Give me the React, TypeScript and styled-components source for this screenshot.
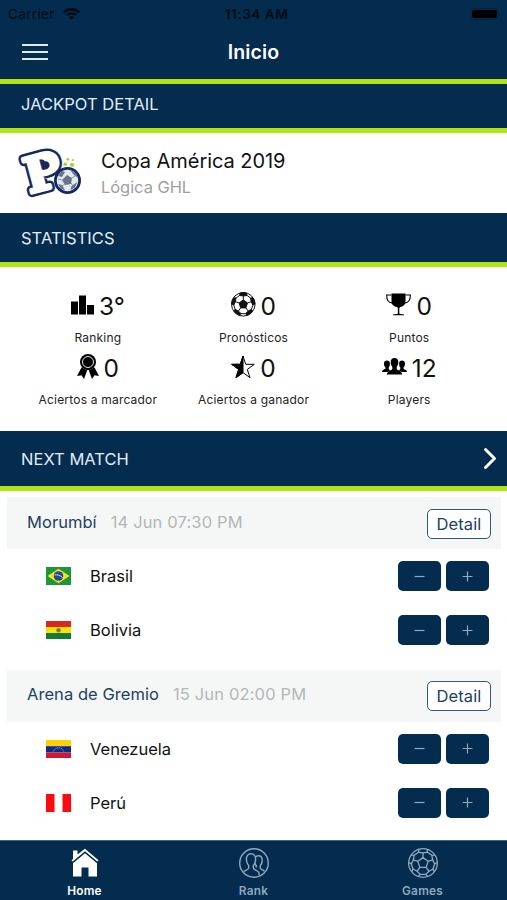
import React from "react";
import styled, { createGlobalStyle } from "styled-components";

const NAVY = "#032c4f";
const LIME = "#b2e313";
const MUTED = "#8fa9bf";

const GlobalStyle = createGlobalStyle`
  * { box-sizing: border-box; }
  body { margin: 0; background: #fff; font-family: Inter, "Liberation Sans", sans-serif; color: #111; }
  svg { display: block; flex: none; overflow: visible; }
`;

const Screen = styled.div`
  width: 507px;
  height: 900px;
  display: flex;
  flex-direction: column;
  background: #fff;
  overflow: hidden;
  white-space: nowrap;
`;

const TopBar = styled.header`
  height: 84px;
  background: ${NAVY};
  border-bottom: 5px solid ${LIME};
`;

const StatusBar = styled.div`
  height: 27px;
  padding: 1px 8px 0;
  display: grid;
  grid-template-columns: 1fr auto 1fr;
  align-items: center;
  font-size: 13.5px;
  letter-spacing: 0.35px;
  color: #020a12;
`;

const Carrier = styled.div`
  display: flex;
  align-items: center;
  gap: 8px;
`;

const Clock = styled.div`
  font-weight: 600;
  font-size: 13.5px;
  letter-spacing: 0.55px;
  padding-left: 6px;
`;

const Battery = styled.div`
  justify-self: end;
  width: 29px;
  height: 12px;
  padding: 1px;
  border: 1px solid #04223d;
  border-radius: 4px;
  &::before {
    content: "";
    display: block;
    height: 8px;
    border-radius: 2px;
    background: #000;
  }
`;

const NavRow = styled.div`
  height: 50px;
  padding: 0 22px;
  display: grid;
  grid-template-columns: 1fr auto 1fr;
  align-items: center;
`;

const Title = styled.h1`
  margin: 0;
  color: #fff;
  font-size: 19.5px;
  font-weight: 600;
  letter-spacing: 0.15px;
`;

const MenuLines = styled.div`
  width: 26px;
  height: 16px;
  display: flex;
  flex-direction: column;
  justify-content: space-between;
  &::before, &::after { content: ""; height: 2px; background: #dfe9f2; }
`;

const MenuLine = styled.div`
  height: 2px;
  background: #dfe9f2;
`;

const SectionBar = styled.div<{ $height: number; $lift?: number }>`
  height: ${(p) => p.$height}px;
  padding: 0 10px ${(p) => p.$lift ?? 0}px 21px;
  display: flex;
  align-items: center;
  justify-content: space-between;
  background: ${NAVY};
  border-bottom: 5px solid ${LIME};
  color: #e3edf6;
  font-size: 16.5px;
  letter-spacing: 0.03px;
`;

const Jackpot = styled.section`
  height: 80px;
  padding-left: 20px;
  display: flex;
  align-items: center;
  gap: 18px;
`;

const JackpotText = styled.div`
  padding-top: 2px;
  display: flex;
  flex-direction: column;
  font-size: 20px;
  line-height: 27px;
  letter-spacing: -0.06px;
`;

const Subtitle = styled.span`
  color: #a0a0a0;
  font-size: 16.5px;
  line-height: 25px;
`;

const Stats = styled.section`
  height: 164px;
  padding: 22px 20px 0;
  display: grid;
  grid-template-columns: repeat(3, 155.7px);
  grid-template-rows: 62px 62px;
`;

const Stat = styled.div`
  display: flex;
  flex-direction: column;
  align-items: center;
`;

const StatTop = styled.div`
  height: 34px;
  display: flex;
  align-items: center;
  gap: 5px;
`;

const IconSlot = styled.span`
  margin-top: -3px;
`;

const StatValue = styled.span`
  font-size: 24.5px;
  line-height: 34px;
`;

const StatLabel = styled.span`
  margin-top: 7px;
  font-size: 12px;
  line-height: 16px;
  letter-spacing: 0.2px;
  color: #222;
`;

const Match = styled.section`
  height: 172.5px;
  padding: 6px 6px 0 7px;
  display: flex;
  flex-direction: column;
`;

const MatchHeader = styled.div`
  height: 52px;
  padding: 0 10px 0 20px;
  display: flex;
  align-items: center;
  background: #f5f6f6;
  color: #1b4163;
  font-size: 16.5px;
  letter-spacing: 0.05px;
`;

const Place = styled.span`
  margin-top: -3px;
`;

const Kickoff = styled.span`
  flex: 1;
  margin: -3px 0 0 14px;
  color: #b5b6b8;
  letter-spacing: 0.15px;
`;

const DetailButton = styled.button`
  width: 64px;
  height: 30px;
  margin-top: 1px;
  padding: 0;
  border: 1.5px solid #33577a;
  border-radius: 5px;
  background: #fff;
  color: #1b4163;
  font: 400 16.5px Inter, sans-serif;
  letter-spacing: 0.1px;
`;

const TeamRow = styled.div`
  height: 54px;
  flex: none;
  padding: 0 12px 0 39px;
  display: flex;
  align-items: center;
`;

const TeamName = styled.span`
  flex: 1;
  margin-left: 19px;
  font-size: 16.5px;
`;

const StepButton = styled.button`
  width: 43px;
  height: 30px;
  margin-left: 5px;
  padding: 0;
  border: 0;
  border-radius: 5px;
  background: ${NAVY};
  display: flex;
  align-items: center;
  justify-content: center;
`;

const TabBar = styled.nav`
  height: 60px;
  margin-top: auto;
  display: grid;
  grid-template-columns: repeat(3, 1fr);
  background: ${NAVY};
  border-top: 1px solid #49657e;
`;

const Tab = styled.div<{ $active?: boolean }>`
  padding-top: 7px;
  display: flex;
  flex-direction: column;
  align-items: center;
  gap: 5px;
  color: ${(p) => (p.$active ? "#fff" : MUTED)};
  font-size: 11.8px;
  font-weight: 600;
  line-height: 16px;
  letter-spacing: 0.25px;
`;

const polar = (r: number, deg: number) => {
  const a = ((deg - 90) * Math.PI) / 180;
  return `${(r * Math.cos(a)).toFixed(2)} ${(r * Math.sin(a)).toFixed(2)}`;
};

const corners = [0, 72, 144, 216, 288];

function Ball({ r, filled, stroke = 1.2, center = 0.36 }: { r: number; filled?: boolean; stroke?: number; center?: number }) {
  const fill = filled ? "currentColor" : "none";
  return (
    <svg width={r * 2} height={r * 2} viewBox={`${-r} ${-r} ${r * 2} ${r * 2}`} fill="none" stroke="currentColor" strokeWidth={stroke} strokeLinejoin="round">
      <circle r={r - stroke / 2} />
      <path fill={fill} d={`M${corners.map((t) => polar(r * center, t)).join("L")}Z`} />
      {corners.map((t) => (
        <React.Fragment key={t}>
          <path d={`M${polar(r * center, t)}L${polar(r * 0.68, t)}M${polar(r * 0.78, t + 23)}L${polar(r * 0.78, t + 49)}`} />
          <path
            fill={fill}
            d={`M${polar(r * 0.95, t - 16)}L${polar(r * 0.78, t - 23)}L${polar(r * 0.68, t)}L${polar(r * 0.78, t + 23)}L${polar(r * 0.95, t + 16)}${filled ? `L${polar(r * 0.95, t)}Z` : ""}`}
          />
        </React.Fragment>
      ))}
    </svg>
  );
}

const Wifi = () => (
  <svg width="17" height="12" viewBox="0 0 17 12" fill="none" stroke="#020a12" strokeWidth="2.3">
    <path d="M1 4.3a10.8 10.8 0 0 1 15 0M3.9 7.2a6.7 6.7 0 0 1 9.2 0" />
    <path d="M8.5 11.8 6 9.3a3.7 3.7 0 0 1 5 0Z" fill="#020a12" stroke="none" />
  </svg>
);

const Logo = () => (
  <svg width="63" height="52" viewBox="0 0 63 52">
    <g transform="translate(1.500 -1.500) rotate(-15 22 26)" fontFamily="DejaVu Serif" fontWeight="700" fontSize="48" strokeLinejoin="round">
      <text x="3" y="43.500" fill="#15295f" stroke="#15295f" strokeWidth="9">P</text>
      <text x="3" y="43.500" fill="#fff" stroke="#fff" strokeWidth="4">P</text>
      <path d="M22 16.500h3.500c5.500 0 5.500 8 0 8H22Z" fill="#15295f" />
    </g>
    <circle cx="47.500" cy="33.500" r="13.500" fill="#15295f" />
    <circle cx="47.500" cy="33.500" r="10.700" fill="#e5e8eb" />
    <path d="m47 28 5 3-1 6-6 1-3-5ZM38 29l4-5 3 1-3 5ZM50 23l6 3 2 5-4-3ZM57.500 35l-3 6-4 2 1-4ZM38 37l4 1 3 5-4-1Z" fill="#66758c" />
    <path d="m52 31 3-2M51 36l2 3M45 37l-3 2M42 33l-4-1" stroke="#8995a7" />
    <path d="m43 18.500 1.300-3.100 3.200.6-1.200 3ZM49.500 19l1.300-3.300 3.700 1-1.200 3.300ZM46 12.500l1.600-2.200 2 2-1.800 1.600ZM51.500 13l1.600-1.500 1 2-1.600.8Z" fill="#acd13b" />
  </svg>
);

const Podium = () => (
  <svg width="23" height="20" viewBox="0 0 23 20" fill="#000">
    <path d="M0 6.500h7v13H0ZM8 .5h7v19H8ZM16 10h7v9.500h-7Z" />
  </svg>
);

const Trophy = () => (
  <svg width="25" height="23" viewBox="0 0 25 23">
    <path d="M5.500.5h14v8c0 3.500-2.800 5-6 6v6.200l4.500.8v.8H7v-.8l4.800-.8v-6.200c-3.500-1-6.300-2.500-6.300-6Z" fill="#000" />
    <path d="M11.200 15h2.800v5.500h-2.800Z" fill="#fff" />
    <path d="M12.600 14v7.500" stroke="#000" strokeWidth="1.400" />
    <path d="M5.500 2H.6c0 5 2 8 6.300 8.300M19.500 2h4.900c0 5-2 8-6.300 8.300" fill="none" stroke="#000" strokeWidth="1.100" />
  </svg>
);

const Ribbon = () => (
  <svg width="22" height="25" viewBox="0 0 22 25">
    <path d="m4.500 13.500 5.800 2.500-3.300 9-2.500-3.700L0 22ZM17.500 13.500l-5.800 2.500 3.300 9 2.500-3.700L22 22Z" fill="#000" />
    <circle cx="11" cy="8" r="8" fill="#000" />
    <circle cx="11" cy="8" r="5.500" fill="none" stroke="#e0e0e0" strokeWidth="1" />
  </svg>
);

const HalfStar = () => (
  <svg width="24" height="24" viewBox="0 0 24 24" stroke="#000" strokeWidth="1">
    <path d="m12 1 2.700 8.300h8.600l-7 5.100 2.700 8.300-7-5.100-7 5.100 2.700-8.300-7-5.100h8.600Z" fill="#fff" />
    <path d="M12 1v16.600l-7 5.100 2.700-8.300-7-5.100h8.600Z" fill="#000" />
  </svg>
);

const People = () => (
  <svg width="25" height="17" viewBox="0 0 25 17" fill="#000">
    <path d="M12.500 0c2.500 0 4 1.700 3.800 4.200-.1 2-.7 3.500-1.600 4.500v2.200c.7 1.600 5 1.300 5.500 5.600H4.800c.5-4.300 4.800-4 5.500-5.600V8.700c-.9-1-1.500-2.500-1.600-4.500C8.500 1.700 10 0 12.500 0Z" />
    <path d="M4.900 2.500c1.900 0 3 1.200 3 3.200 0 2-.7 3.200-1.200 3.900v1.500c.3.600 1.200.9 1.700 1.200-1.200.5-2.200 1-2.800 1.700H0c.3-2.700 2.900-2 3.400-3.200V9.600C2.600 8.600 2 7.300 2 5.700c0-2 1.100-3.200 2.900-3.200Z" />
    <path d="M20.100 2.500c-1.900 0-3 1.200-3 3.200 0 2 .7 3.200 1.200 3.900v1.500c-.3.600-1.200.9-1.700 1.200 1.200.5 2.200 1 2.800 1.700H25c-.3-2.700-2.900-2-3.400-3.200V9.600c.8-1 1.400-2.300 1.400-3.900 0-2-1.100-3.200-2.900-3.200Z" />
  </svg>
);

const Chevron = () => (
  <svg width="13" height="21" viewBox="0 0 13 21" fill="none" stroke="#fff" strokeWidth="3" strokeLinecap="round" strokeLinejoin="round">
    <path d="m1.500 1.500 9 9-9 9" />
  </svg>
);

const House = () => (
  <svg width="28" height="30" viewBox="0 0 28 30">
    <path d="M2 2.500h4.500v4L14 .8l13.500 11.500-1.200 1.300L14 3.300 1.700 13.600.5 12.300 2 11Z" fill="#fff" />
    <path d="M14 5.200 26 15.300v13.200h-8.500v-9h-7v9H2V15.300Z" fill="#fff" />
  </svg>
);

const RankIcon = () => (
  <svg width="30" height="30" viewBox="0 0 30 30" fill="none" stroke={MUTED} strokeWidth="1.400">
    <circle cx="15" cy="15" r="14.300" />
    <path d="M4.500 24.300c1-2.300 4.800-2 5.200-4.300v-2.200C8.200 16 7.600 14 7.400 11.600 7.200 8 9 5.800 12 5.800s4.800 2.200 4.600 5.800c-.2 2.400-.8 4.400-2.300 6.200V20c.5 2.300 4.800 2 5.600 4.800.2.700.3 1.400.3 2.500" />
    <path d="M16.400 9.200c.7-.9 1.700-1.400 3-1.400 2.500 0 4 1.700 3.800 4.800-.1 2-.8 4-2 5.300v2.200c.4 1.400 3.200 1.400 4.300 3.200M15.700 14.700c.3 1.100.8 2 1.500 2.700v2" />
  </svg>
);

type Country = "brasil" | "bolivia" | "venezuela" | "peru";

const flags: Record<Country, React.ReactNode> = {
  brasil: (
    <>
      <path d="M0 0h25v18H0Z" fill="#20963c" />
      <path d="m12.500 1.800 11 7.200-11 7.200L1.500 9Z" fill="#f5e321" />
      <circle cx="12.500" cy="9" r="4.800" fill="#244b91" />
      <path d="M8.300 8c3-.7 6 .2 8.400 2.700" stroke="#c6dbe9" fill="none" />
    </>
  ),
  bolivia: (
    <>
      <path d="M0 0h25v6H0Z" fill="#da291c" />
      <path d="M0 6h25v6H0Z" fill="#f6e500" />
      <path d="M0 12h25v6H0Z" fill="#147a37" />
      <circle cx="12.500" cy="9.200" r="2.300" fill="#9a7b2c" />
      <circle cx="12.500" cy="9.200" r="1" fill="#59623d" />
    </>
  ),
  venezuela: (
    <>
      <path d="M0 0h25v6.200H0Z" fill="#ffcf0b" />
      <path d="M0 6.200h25v6.300H0Z" fill="#0b2b85" />
      <path d="M0 12.500h25V18H0Z" fill="#cf1834" />
      <path d="M7.300 11.500a5.500 5.500 0 0 1 10.400 0" fill="none" stroke="#8e9dca" strokeDasharray="1.300 .5" />
    </>
  ),
  peru: (
    <>
      <path d="M0 0h25v18H0Z" fill="#fff" />
      <path d="M0 0h8.500v18H0ZM16.500 0H25v18h-8.500Z" fill="#fb0b0f" />
    </>
  ),
};

const Sign = ({ plus }: { plus?: boolean }) => (
  <svg width="11" height="11" viewBox="0 0 11 11" stroke="#91a9bf" strokeWidth="1.200">
    <path d={plus ? "M.5 5.500h10M5.500.5v10" : "M.5 5.500h10"} />
  </svg>
);

function Team({ name, flag }: { name: string; flag: Country }) {
  return (
    <TeamRow>
      <svg width="25" height="18" viewBox="0 0 25 18">{flags[flag]}</svg>
      <TeamName>{name}</TeamName>
      <StepButton><Sign /></StepButton>
      <StepButton><Sign plus /></StepButton>
    </TeamRow>
  );
}

const stats = [
  { icon: <Podium />, value: "3°", label: "Ranking" },
  { icon: <Ball r={12.3} filled stroke={1} />, value: "0", label: "Pronósticos" },
  { icon: <Trophy />, value: "0", label: "Puntos" },
  { icon: <Ribbon />, value: "0", label: "Aciertos a marcador" },
  { icon: <HalfStar />, value: "0", label: "Aciertos a ganador" },
  { icon: <People />, value: "12", label: "Players" },
];

const matches: { place: string; time: string; teams: { name: string; flag: Country }[] }[] = [
  { place: "Morumbí", time: "14 Jun 07:30 PM", teams: [{ name: "Brasil", flag: "brasil" }, { name: "Bolivia", flag: "bolivia" }] },
  { place: "Arena de Gremio", time: "15 Jun 02:00 PM", teams: [{ name: "Venezuela", flag: "venezuela" }, { name: "Perú", flag: "peru" }] },
];

export default function App() {
  return (
    <>
      <GlobalStyle />
      <Screen>
        <TopBar>
          <StatusBar>
            <Carrier>Carrier <Wifi /></Carrier>
            <Clock>11:34 AM</Clock>
            <Battery />
          </StatusBar>
          <NavRow>
            <MenuLines><MenuLine /></MenuLines>
            <Title>Inicio</Title>
          </NavRow>
        </TopBar>
        <SectionBar $height={49} $lift={4}>JACKPOT DETAIL</SectionBar>
        <Jackpot>
          <Logo />
          <JackpotText>
            Copa América 2019
            <Subtitle>Lógica GHL</Subtitle>
          </JackpotText>
        </Jackpot>
        <SectionBar $height={54}>STATISTICS</SectionBar>
        <Stats>
          {stats.map((s) => (
            <Stat key={s.label}>
              <StatTop><IconSlot>{s.icon}</IconSlot><StatValue>{s.value}</StatValue></StatTop>
              <StatLabel>{s.label}</StatLabel>
            </Stat>
          ))}
        </Stats>
        <SectionBar $height={60}>NEXT MATCH<Chevron /></SectionBar>
        {matches.map((m) => (
          <Match key={m.place}>
            <MatchHeader>
              <Place>{m.place}</Place>
              <Kickoff>{m.time}</Kickoff>
              <DetailButton>Detail</DetailButton>
            </MatchHeader>
            {m.teams.map((t) => <Team key={t.name} {...t} />)}
          </Match>
        ))}
        <TabBar>
          <Tab $active><House />Home</Tab>
          <Tab><RankIcon />Rank</Tab>
          <Tab><Ball r={15} stroke={1.3} />Games</Tab>
        </TabBar>
      </Screen>
    </>
  );
}
